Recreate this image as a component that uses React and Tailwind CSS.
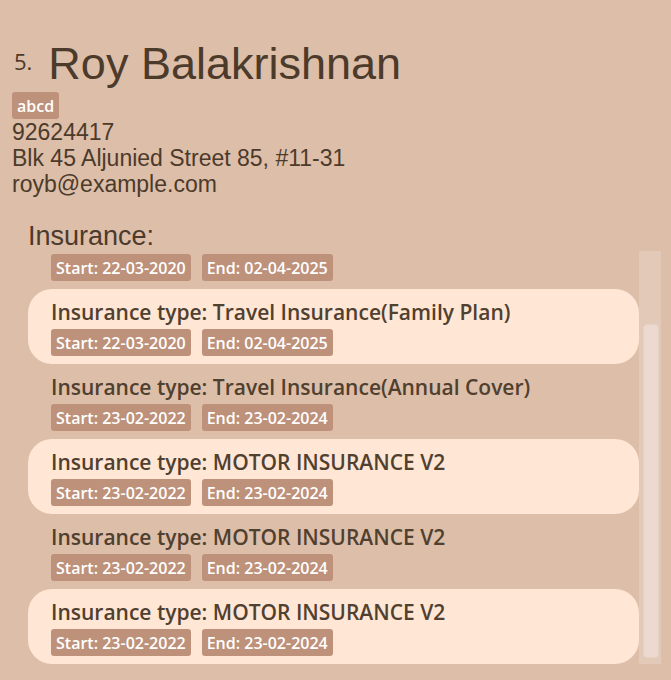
const policies = [
  { start: "22-03-2020", end: "02-04-2025" },
  { name: "Travel Insurance(Family Plan)", start: "22-03-2020", end: "02-04-2025" },
  { name: "Travel Insurance(Annual Cover)", start: "23-02-2022", end: "23-02-2024" },
  { name: "MOTOR INSURANCE V2", start: "23-02-2022", end: "23-02-2024" },
  { name: "MOTOR INSURANCE V2", start: "23-02-2022", end: "23-02-2024" },
  { name: "MOTOR INSURANCE V2", start: "23-02-2022", end: "23-02-2024" },
];

function Tag({ children }) {
  return (
    <span className="flex h-[27px] items-center rounded-[3px] bg-[#be917a] px-[5px] font-['Open_Sans','Noto_Sans',sans-serif] text-[16px] font-semibold whitespace-nowrap text-white">
      {children}
    </span>
  );
}

function Policy({ policy, highlighted }) {
  return (
    <li className={`shrink-0 rounded-3xl pb-2 pl-[23px] ${highlighted ? "bg-[#ffe6d5]" : ""}`}>
      {policy.name && (
        <h3 className="pt-2 pb-0.5 font-['Open_Sans','Noto_Sans',sans-serif] text-[21px] leading-[30px] font-semibold whitespace-nowrap text-[#50402f]">
          Insurance type: {policy.name}
        </h3>
      )}
      <div className="flex gap-[11px]">
        <Tag>Start: {policy.start}</Tag>
        <Tag>End: {policy.end}</Tag>
      </div>
    </li>
  );
}

export default function App() {
  return (
    <main className="flex h-screen flex-col bg-[#ddbea9] pt-[37px] pb-4 font-['Liberation_Sans',Arial,sans-serif] text-[#4c3a2b]">
      <header className="px-3">
        <div className="flex items-start gap-4 pb-px pl-0.5">
          <span className="font-['Open_Sans','Noto_Sans',sans-serif] text-[22px] leading-[48px] font-medium">5.</span>
          <h1 className="text-[45px] leading-[54px]">Roy Balakrishnan</h1>
        </div>
        <div className="flex">
          <Tag>abcd</Tag>
        </div>
        <div className="text-[23px] leading-[26px]">
          <p>92624417</p>
          <p>Blk 45 Aljunied Street 85, #11-31</p>
          <p>royb@example.com</p>
        </div>
      </header>
      <section className="flex min-h-0 flex-1 flex-col pt-6 pr-2.5 pl-7">
        <h2 className="text-[27px] leading-[30px]">Insurance:</h2>
        <div className="flex min-h-0 flex-1">
          <ul className="flex min-w-0 flex-1 flex-col justify-end overflow-hidden">
            {policies.map((policy, i) => (
              <Policy key={i} policy={policy} highlighted={i % 2 === 1} />
            ))}
          </ul>
          <div className="flex w-[22px] flex-col bg-[#e3c9b8] pt-[73px] pr-0.5 pb-1.5 pl-1" aria-hidden="true">
            <div className="flex-1 rounded-[4px] border border-[#e6d0c2] bg-[#ecdad0]" />
          </div>
        </div>
      </section>
    </main>
  );
}
